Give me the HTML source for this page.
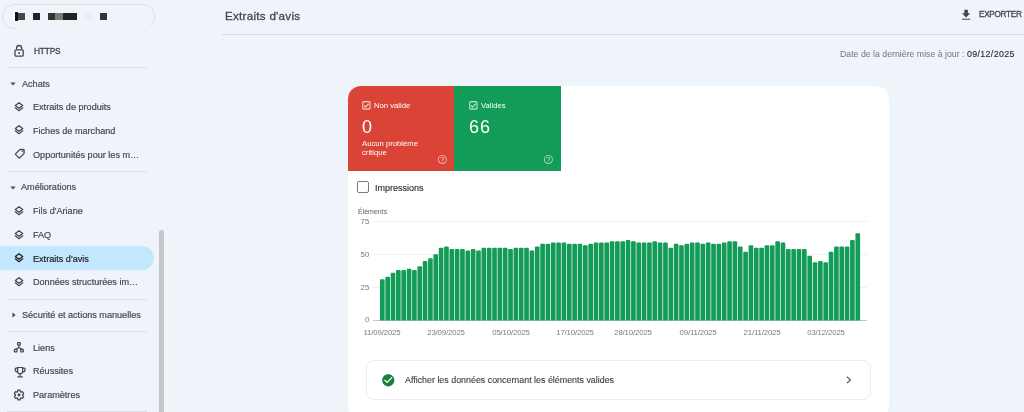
<!DOCTYPE html>
<html><head><meta charset="utf-8">
<style>
*{margin:0;padding:0;box-sizing:border-box}
html,body{width:1024px;height:412px;overflow:hidden;background:#eff3fa;font-family:"Liberation Sans",sans-serif;color:#444746}
.a{position:absolute;white-space:nowrap;line-height:1;will-change:transform}
svg{position:absolute;display:block;overflow:visible}
.side{font-size:9.1px;color:#444746;-webkit-text-stroke:0.18px #444746}
.hdr{font-size:9.1px;color:#444746;-webkit-text-stroke:0.18px #444746}
.dv{position:absolute;height:1px;background:#dcdfe1}
.tl{font-size:7.7px;color:#fff}
.big{font-size:18px;color:#fff}
.yl{left:350px;width:19.3px;text-align:right;font-size:7.8px;color:#757a7f}
.xl{width:60px;text-align:center;top:328.9px;font-size:7.8px;letter-spacing:-0.15px;color:#757a7f}
</style></head><body>

<svg style="left:0;top:0" width="160" height="32" viewBox="0 0 160 32"><path fill="none" stroke="#dcdfe4" stroke-width="1" d="M17.5 28.5H14.5A12 12 0 0 1 14.5 4.5H142.5A12 12 0 0 1 150.5 25.5"/></svg>
<div style="position:absolute;left:12.8px;top:9.7px;width:5.1px;height:13.4px;background:#fff;border-radius:2px"></div>
<div style="position:absolute;left:14.9px;top:11.9px;width:2.7px;height:8.8px;background:#111"></div>
<div style="position:absolute;left:17.6px;top:12.7px;width:7.4px;height:7.2px;background:#4a4446"></div>
<div style="position:absolute;left:32.8px;top:12.7px;width:7.2px;height:7.2px;background:#232323"></div>
<div style="position:absolute;left:47.6px;top:12.6px;width:7.4px;height:7.3px;background:#333"></div>
<div style="position:absolute;left:55px;top:12.6px;width:7.6px;height:7.3px;background:#787b7a"></div>
<div style="position:absolute;left:62.6px;top:12.6px;width:14.6px;height:7.3px;background:#222"></div>
<div style="position:absolute;left:84.5px;top:12.5px;width:8.6px;height:7.4px;background:#eceef2"></div>
<div style="position:absolute;left:100.1px;top:12.6px;width:7.3px;height:7.3px;background:#333"></div>

<svg style="left:8px;top:39px" width="24" height="24" viewBox="0 0 24 24"><g fill="none" stroke="#444746" stroke-width="1.3"><rect x="7" y="10.8" width="8.2" height="6.4" rx="1.2"/><path d="M8.6 10.8V9a2.5 2.5 0 0 1 5 0v1.8"/></g><circle cx="11.1" cy="13.9" r="1" fill="#444746"/></svg>
<div class="a side" style="left:33.5px;top:47.2px;font-size:8.3px;letter-spacing:-0.15px;-webkit-text-stroke:0.3px #444746">HTTPS</div>
<div class="dv" style="left:7px;top:67px;width:140px"></div>

<svg style="left:10px;top:82px" width="6" height="4" viewBox="0 0 6 4"><path fill="#444746" d="M0.5 0.5h5L3 3.5z"/></svg>
<div class="a hdr" style="left:21.6px;top:79.60px;">Achats</div>
<svg style="left:13px;top:100.60px" width="12" height="12" viewBox="0 0 24 24"><g fill="none" stroke="#444746" stroke-width="2.5" stroke-linejoin="round" stroke-linecap="round"><path d="M12 3.6L19.4 9.1L12 14.6L4.6 9.1Z"/><path d="M4.6 13.7L12 19.3L19.4 13.7"/></g></svg>
<div class="a side" style="left:33.4px;top:102.90px;">Extraits de produits</div>
<svg style="left:13px;top:124.10px" width="12" height="12" viewBox="0 0 24 24"><g fill="none" stroke="#444746" stroke-width="2.5" stroke-linejoin="round" stroke-linecap="round"><path d="M12 3.6L19.4 9.1L12 14.6L4.6 9.1Z"/><path d="M4.6 13.7L12 19.3L19.4 13.7"/></g></svg>
<div class="a side" style="left:33.4px;top:126.70px;">Fiches de marchand</div>
<svg style="left:13.5px;top:147.8px" width="11.5" height="11.5" viewBox="0 0 24 24"><g transform="rotate(90 12 12)"><path fill="#444746" stroke="#444746" stroke-width="0.7" stroke-linejoin="round" d="M21.41 11.41l-8.83-8.83c-.37-.37-.88-.58-1.41-.58H4c-1.1 0-2 .9-2 2v7.17c0 .53.21 1.04.59 1.41l8.83 8.83c.78.78 2.05.78 2.83 0l7.17-7.17c.78-.78.78-2.04-.01-2.83zM12.83 20L4 11.17V4h7.17L20 12.83 12.83 20zM6.5 5C7.33 5 8 5.67 8 6.5S7.33 8 6.5 8 5 7.33 5 6.5 5.67 5 6.5 5z"/></g></svg>
<div class="a side" style="left:33.4px;top:151.00px;">Opportunités pour les m…</div>
<div class="dv" style="left:7px;top:171px;width:140px"></div>
<svg style="left:10px;top:186px" width="6" height="4" viewBox="0 0 6 4"><path fill="#444746" d="M0.5 0.5h5L3 3.5z"/></svg>
<div class="a hdr" style="left:21.4px;top:183.20px;">Améliorations</div>
<svg style="left:13px;top:204.60px" width="12" height="12" viewBox="0 0 24 24"><g fill="none" stroke="#444746" stroke-width="2.5" stroke-linejoin="round" stroke-linecap="round"><path d="M12 3.6L19.4 9.1L12 14.6L4.6 9.1Z"/><path d="M4.6 13.7L12 19.3L19.4 13.7"/></g></svg>
<div class="a side" style="left:33.4px;top:207.00px;">Fils d'Ariane</div>
<svg style="left:13px;top:228.60px" width="12" height="12" viewBox="0 0 24 24"><g fill="none" stroke="#444746" stroke-width="2.5" stroke-linejoin="round" stroke-linecap="round"><path d="M12 3.6L19.4 9.1L12 14.6L4.6 9.1Z"/><path d="M4.6 13.7L12 19.3L19.4 13.7"/></g></svg>
<div class="a side" style="left:33.4px;top:230.90px;">FAQ</div>
<div style="position:absolute;left:-20px;top:246.4px;width:174px;height:24px;background:#c2e7ff;border-radius:0 12px 12px 0"></div>
<svg style="left:13px;top:252.10px" width="12" height="12" viewBox="0 0 24 24"><g fill="none" stroke="#1f1f1f" stroke-width="2.5" stroke-linejoin="round" stroke-linecap="round"><path d="M12 3.6L19.4 9.1L12 14.6L4.6 9.1Z"/><path d="M4.6 13.7L12 19.3L19.4 13.7"/></g></svg>
<div class="a side" style="left:33.4px;top:254.60px;color:#1f1f1f;-webkit-text-stroke:0.2px #1f1f1f">Extraits d'avis</div>
<svg style="left:13px;top:275.60px" width="12" height="12" viewBox="0 0 24 24"><g fill="none" stroke="#444746" stroke-width="2.5" stroke-linejoin="round" stroke-linecap="round"><path d="M12 3.6L19.4 9.1L12 14.6L4.6 9.1Z"/><path d="M4.6 13.7L12 19.3L19.4 13.7"/></g></svg>
<div class="a side" style="left:33.4px;top:278.10px;">Données structurées im…</div>
<div class="dv" style="left:7px;top:298.5px;width:140px"></div>
<svg style="left:11.8px;top:312px" width="4" height="6" viewBox="0 0 4 6"><path fill="#444746" d="M0.5 0.5v5L3.5 3z"/></svg>
<div class="a hdr" style="left:21.8px;top:310.70px;">Sécurité et actions manuelles</div>
<div class="dv" style="left:7px;top:331px;width:140px"></div>
<svg style="left:8px;top:338px" width="24" height="24" viewBox="0 0 24 24"><g fill="none" stroke="#444746" stroke-width="1.2"><rect x="9.6" y="4.6" width="2.7" height="2.5" rx=".3"/><rect x="6.4" y="11.4" width="2.6" height="2.4" rx=".3"/><rect x="12.7" y="11.4" width="2.6" height="2.4" rx=".3"/><path d="M10.95 7.6V9.4L7.7 11.2M10.95 9.4l3.1 1.8"/></g></svg>
<div class="a side" style="left:33.4px;top:343.70px;">Liens</div>
<svg style="left:8px;top:359px" width="24" height="24" viewBox="0 0 24 24"><g fill="none" stroke="#444746" stroke-width="1.2"><path d="M9.6 8.5h5v3.8a2.5 2.5 0 0 1-5 0z"/><path d="M9.6 9.2H8a.9.9 0 0 0-.9.9v.3a2.6 2.6 0 0 0 2.6 2.6M14.6 9.2h1.6a.9.9 0 0 1 .9.9v.3a2.6 2.6 0 0 1-2.6 2.6"/></g><rect x="11.55" y="14.6" width="1.1" height="3" fill="#444746"/><rect x="9.4" y="17.2" width="5.4" height="1.4" rx=".3" fill="#444746"/></svg>
<div class="a side" style="left:33.4px;top:367.40px;">Réussites</div>
<svg style="left:13px;top:389px" width="12" height="12" viewBox="0 0 24 24"><path fill="none" stroke="#444746" stroke-width="2.5" d="M19.14 12.94c.04-.3.06-.61.06-.94 0-.32-.02-.64-.07-.94l2.03-1.58c.18-.14.23-.41.12-.61l-1.92-3.32c-.12-.22-.37-.29-.59-.22l-2.39.96c-.5-.38-1.03-.7-1.62-.94l-.36-2.54c-.04-.24-.24-.41-.48-.41h-3.84c-.24 0-.43.17-.47.41l-.36 2.54c-.59.24-1.130.57-1.62.94l-2.39-.96c-.22-.08-.47 0-.59.22L2.74 8.87c-.12.21-.08.47.12.61l2.03 1.58c-.05.3-.09.63-.09.94s.02.64.07.94l-2.03 1.58c-.18.14-.23.41-.12.61l1.92 3.32c.12.22.37.29.59.22l2.39-.96c.5.38 1.03.7 1.62.94l.36 2.54c.05.24.24.41.48.41h3.84c.24 0 .44-.17.47-.41l.36-2.54c.59-.24 1.13-.56 1.62-.94l2.39.96c.22.08.47 0 .59-.22l1.92-3.32c.12-.22.07-.47-.12-.61l-2.01-1.58z"/><circle cx="12" cy="12" r="2.9" fill="#444746"/></svg>
<div class="a side" style="left:33.4px;top:391.00px;">Paramètres</div>
<div class="dv" style="left:7px;top:411px;width:140px"></div>
<div style="position:absolute;left:159px;top:230px;width:4.5px;height:200px;background:#c5c6c8;border-radius:2.25px"></div>
<div class="a" style="left:224.6px;top:10.2px;font-size:11.6px;letter-spacing:0.28px;color:#444746;-webkit-text-stroke:0.3px #444746">Extraits d'avis</div>
<div class="dv" style="left:222px;top:34px;width:802px;background:#d9dde3"></div>
<svg style="left:959.2px;top:7.9px" width="14.2" height="14.2" viewBox="0 0 24 24"><path fill="#444746" d="M19 9h-4V3H9v6H5l7 7 7-7zM5 18v2h14v-2H5z"/></svg>
<div class="a" style="left:978.8px;top:11.2px;font-size:8.2px;letter-spacing:-0.3px;color:#444746;-webkit-text-stroke:0.3px #444746">EXPORTER</div>
<div class="a" style="right:9.5px;top:49.5px;font-size:8.75px;color:#70757a">Date de la dernière mise à jour : <span style="color:#303134;font-size:8.85px;letter-spacing:0.35px;-webkit-text-stroke:0.15px #303134">09/12/202<span style="letter-spacing:0">5</span></span></div>

<div style="position:absolute;left:348px;top:86.4px;width:541px;height:333px;background:#fff;border-radius:13px;overflow:hidden">
  <div style="position:absolute;left:0;top:0;width:106.3px;height:85px;background:#d94436"></div>
  <div style="position:absolute;left:106.3px;top:0;width:106.8px;height:85px;background:#129c57"></div>
</div>

<svg style="left:360.9px;top:99.9px" width="10.8" height="10.8" viewBox="0 0 24 24"><path fill="#fff" fill-opacity=".9" d="M19 3H5c-1.11 0-2 .9-2 2v14c0 1.1.89 2 2 2h14c1.11 0 2-.9 2-2V5c0-1.1-.89-2-2-2zm0 16H5V5h14v14zM17.99 9l-1.41-1.42-6.59 6.59-2.58-2.57-1.42 1.41 4 3.99z"/></svg>
<div class="a tl" style="left:373.7px;top:101.5px">Non valide</div>
<div class="a big" style="left:361.6px;top:118.2px">0</div>
<div class="a tl" style="left:361.8px;top:139.2px;line-height:9px">Aucun problème<br>critique</div>
<svg style="left:436.9px;top:154px" width="10.8" height="10.8" viewBox="0 0 24 24"><path fill="#fff" fill-opacity=".6" d="M11 18h2v-2h-2v2zm1-16C6.48 2 2 6.48 2 12s4.48 10 10 10 10-4.48 10-10S17.52 2 12 2zm0 18c-4.41 0-8-3.59-8-8s3.590-8 8-8 8 3.59 8 8-3.59 8-8 8zm0-14c-2.21 0-4 1.79-4 4h2c0-1.1.9-2 2-2s2 .9 2 2c0 2-3 1.75-3 5h2c0-2.25 3-2.5 3-5 0-2.21-1.79-4-4-4z"/></svg>
<svg style="left:467.9px;top:99.9px" width="10.8" height="10.8" viewBox="0 0 24 24"><path fill="#fff" fill-opacity=".9" d="M19 3H5c-1.11 0-2 .9-2 2v14c0 1.1.89 2 2 2h14c1.11 0 2-.9 2-2V5c0-1.1-.89-2-2-2zm0 16H5V5h14v14zM17.99 9l-1.41-1.42-6.59 6.59-2.58-2.57-1.42 1.41 4 3.99z"/></svg>
<div class="a tl" style="left:480.5px;top:101.5px">Valides</div>
<div class="a big" style="left:468.9px;top:118.2px;letter-spacing:1px">66</div>
<svg style="left:543.2px;top:154px" width="10.8" height="10.8" viewBox="0 0 24 24"><path fill="#fff" fill-opacity=".6" d="M11 18h2v-2h-2v2zm1-16C6.48 2 2 6.48 2 12s4.48 10 10 10 10-4.48 10-10S17.52 2 12 2zm0 18c-4.41 0-8-3.59-8-8s3.590-8 8-8 8 3.59 8 8-3.59 8-8 8zm0-14c-2.21 0-4 1.79-4 4h2c0-1.1.9-2 2-2s2 .9 2 2c0 2-3 1.75-3 5h2c0-2.25 3-2.5 3-5 0-2.21-1.79-4-4-4z"/></svg>

<div style="position:absolute;left:357.3px;top:181.3px;width:12px;height:12px;border:1.6px solid #787c80;border-radius:2px"></div>
<div class="a" style="left:375.4px;top:183.6px;font-size:9px;color:#303134;-webkit-text-stroke:0.15px #303134">Impressions</div>
<div class="a" style="left:357.5px;top:208.3px;font-size:7px;color:#5f6368">Éléments</div>

<svg style="left:340px;top:200px" width="540" height="145" viewBox="0 0 540 145"><rect x="33" y="21" width="494" height="1" fill="#eef0f2"/><rect x="33" y="54" width="494" height="1" fill="#eef0f2"/><rect x="33" y="87" width="494" height="1" fill="#eef0f2"/><rect x="33" y="120" width="494" height="1" fill="#c4c7cb"/><g fill="#129c57"><path d="M40.00 120.50V80.29q0-1 1-1h2.65q1 0 1 1V120.50z"/><path d="M45.34 120.50V77.66q0-1 1-1h2.65q1 0 1 1V120.50z"/><path d="M50.68 120.50V73.72q0-1 1-1h2.65q1 0 1 1V120.50z"/><path d="M56.03 120.50V71.09q0-1 1-1h2.65q1 0 1 1V120.50z"/><path d="M61.37 120.50V71.09q0-1 1-1h2.65q1 0 1 1V120.50z"/><path d="M66.71 120.50V69.78q0-1 1-1h2.65q1 0 1 1V120.50z"/><path d="M72.05 120.50V71.09q0-1 1-1h2.65q1 0 1 1V120.50z"/><path d="M77.39 120.50V67.15q0-1 1-1h2.65q1 0 1 1V120.50z"/><path d="M82.74 120.50V61.90q0-1 1-1h2.65q1 0 1 1V120.50z"/><path d="M88.08 120.50V59.27q0-1 1-1h2.65q1 0 1 1V120.50z"/><path d="M93.42 120.50V55.34q0-1 1-1h2.65q1 0 1 1V120.50z"/><path d="M98.76 120.50V48.77q0-1 1-1h2.65q1 0 1 1V120.50z"/><path d="M104.10 120.50V47.46q0-1 1-1h2.65q1 0 1 1V120.50z"/><path d="M109.45 120.50V50.08q0-1 1-1h2.65q1 0 1 1V120.50z"/><path d="M114.79 120.50V50.08q0-1 1-1h2.65q1 0 1 1V120.50z"/><path d="M120.13 120.50V50.08q0-1 1-1h2.65q1 0 1 1V120.50z"/><path d="M125.47 120.50V51.40q0-1 1-1h2.65q1 0 1 1V120.50z"/><path d="M130.81 120.50V50.08q0-1 1-1h2.65q1 0 1 1V120.50z"/><path d="M136.16 120.50V51.40q0-1 1-1h2.65q1 0 1 1V120.50z"/><path d="M141.50 120.50V48.77q0-1 1-1h2.65q1 0 1 1V120.50z"/><path d="M146.84 120.50V48.77q0-1 1-1h2.65q1 0 1 1V120.50z"/><path d="M152.18 120.50V48.77q0-1 1-1h2.65q1 0 1 1V120.50z"/><path d="M157.52 120.50V48.77q0-1 1-1h2.65q1 0 1 1V120.50z"/><path d="M162.87 120.50V48.77q0-1 1-1h2.65q1 0 1 1V120.50z"/><path d="M168.21 120.50V50.08q0-1 1-1h2.65q1 0 1 1V120.50z"/><path d="M173.55 120.50V48.77q0-1 1-1h2.65q1 0 1 1V120.50z"/><path d="M178.89 120.50V48.77q0-1 1-1h2.65q1 0 1 1V120.50z"/><path d="M184.23 120.50V48.77q0-1 1-1h2.65q1 0 1 1V120.50z"/><path d="M189.58 120.50V51.40q0-1 1-1h2.65q1 0 1 1V120.50z"/><path d="M194.92 120.50V47.46q0-1 1-1h2.65q1 0 1 1V120.50z"/><path d="M200.26 120.50V44.83q0-1 1-1h2.65q1 0 1 1V120.50z"/><path d="M205.60 120.50V44.83q0-1 1-1h2.65q1 0 1 1V120.50z"/><path d="M210.94 120.50V43.52q0-1 1-1h2.65q1 0 1 1V120.50z"/><path d="M216.29 120.50V43.52q0-1 1-1h2.65q1 0 1 1V120.50z"/><path d="M221.63 120.50V43.52q0-1 1-1h2.65q1 0 1 1V120.50z"/><path d="M226.97 120.50V44.83q0-1 1-1h2.65q1 0 1 1V120.50z"/><path d="M232.31 120.50V44.83q0-1 1-1h2.65q1 0 1 1V120.50z"/><path d="M237.65 120.50V44.83q0-1 1-1h2.65q1 0 1 1V120.50z"/><path d="M243.00 120.50V46.14q0-1 1-1h2.65q1 0 1 1V120.50z"/><path d="M248.34 120.50V44.83q0-1 1-1h2.65q1 0 1 1V120.50z"/><path d="M253.68 120.50V43.52q0-1 1-1h2.65q1 0 1 1V120.50z"/><path d="M259.02 120.50V43.52q0-1 1-1h2.65q1 0 1 1V120.50z"/><path d="M264.36 120.50V43.52q0-1 1-1h2.65q1 0 1 1V120.50z"/><path d="M269.71 120.50V42.20q0-1 1-1h2.65q1 0 1 1V120.50z"/><path d="M275.05 120.50V42.20q0-1 1-1h2.65q1 0 1 1V120.50z"/><path d="M280.39 120.50V42.20q0-1 1-1h2.65q1 0 1 1V120.50z"/><path d="M285.73 120.50V40.89q0-1 1-1h2.65q1 0 1 1V120.50z"/><path d="M291.07 120.50V42.20q0-1 1-1h2.65q1 0 1 1V120.50z"/><path d="M296.42 120.50V43.52q0-1 1-1h2.65q1 0 1 1V120.50z"/><path d="M301.76 120.50V43.52q0-1 1-1h2.65q1 0 1 1V120.50z"/><path d="M307.10 120.50V43.52q0-1 1-1h2.65q1 0 1 1V120.50z"/><path d="M312.44 120.50V42.20q0-1 1-1h2.65q1 0 1 1V120.50z"/><path d="M317.78 120.50V43.52q0-1 1-1h2.65q1 0 1 1V120.50z"/><path d="M323.13 120.50V43.52q0-1 1-1h2.65q1 0 1 1V120.50z"/><path d="M328.47 120.50V48.77q0-1 1-1h2.65q1 0 1 1V120.50z"/><path d="M333.81 120.50V44.83q0-1 1-1h2.65q1 0 1 1V120.50z"/><path d="M339.15 120.50V46.14q0-1 1-1h2.65q1 0 1 1V120.50z"/><path d="M344.49 120.50V44.83q0-1 1-1h2.65q1 0 1 1V120.50z"/><path d="M349.84 120.50V43.52q0-1 1-1h2.65q1 0 1 1V120.50z"/><path d="M355.18 120.50V43.52q0-1 1-1h2.65q1 0 1 1V120.50z"/><path d="M360.52 120.50V44.83q0-1 1-1h2.65q1 0 1 1V120.50z"/><path d="M365.86 120.50V43.52q0-1 1-1h2.65q1 0 1 1V120.50z"/><path d="M371.20 120.50V44.83q0-1 1-1h2.65q1 0 1 1V120.50z"/><path d="M376.55 120.50V44.83q0-1 1-1h2.65q1 0 1 1V120.50z"/><path d="M381.89 120.50V43.52q0-1 1-1h2.65q1 0 1 1V120.50z"/><path d="M387.23 120.50V42.20q0-1 1-1h2.65q1 0 1 1V120.50z"/><path d="M392.57 120.50V42.20q0-1 1-1h2.65q1 0 1 1V120.50z"/><path d="M397.91 120.50V47.46q0-1 1-1h2.65q1 0 1 1V120.50z"/><path d="M403.26 120.50V52.71q0-1 1-1h2.65q1 0 1 1V120.50z"/><path d="M408.60 120.50V46.14q0-1 1-1h2.65q1 0 1 1V120.50z"/><path d="M413.94 120.50V48.77q0-1 1-1h2.65q1 0 1 1V120.50z"/><path d="M419.28 120.50V48.77q0-1 1-1h2.65q1 0 1 1V120.50z"/><path d="M424.62 120.50V46.14q0-1 1-1h2.65q1 0 1 1V120.50z"/><path d="M429.97 120.50V46.14q0-1 1-1h2.65q1 0 1 1V120.50z"/><path d="M435.31 120.50V42.20q0-1 1-1h2.65q1 0 1 1V120.50z"/><path d="M440.65 120.50V43.52q0-1 1-1h2.65q1 0 1 1V120.50z"/><path d="M445.99 120.50V50.08q0-1 1-1h2.65q1 0 1 1V120.50z"/><path d="M451.33 120.50V50.08q0-1 1-1h2.65q1 0 1 1V120.50z"/><path d="M456.68 120.50V50.08q0-1 1-1h2.65q1 0 1 1V120.50z"/><path d="M462.02 120.50V50.08q0-1 1-1h2.65q1 0 1 1V120.50z"/><path d="M467.36 120.50V56.65q0-1 1-1h2.65q1 0 1 1V120.50z"/><path d="M472.70 120.50V63.21q0-1 1-1h2.65q1 0 1 1V120.50z"/><path d="M478.04 120.50V61.90q0-1 1-1h2.65q1 0 1 1V120.50z"/><path d="M483.39 120.50V63.21q0-1 1-1h2.65q1 0 1 1V120.50z"/><path d="M488.73 120.50V52.71q0-1 1-1h2.65q1 0 1 1V120.50z"/><path d="M494.07 120.50V47.46q0-1 1-1h2.65q1 0 1 1V120.50z"/><path d="M499.41 120.50V47.46q0-1 1-1h2.65q1 0 1 1V120.50z"/><path d="M504.75 120.50V47.46q0-1 1-1h2.65q1 0 1 1V120.50z"/><path d="M510.10 120.50V40.89q0-1 1-1h2.65q1 0 1 1V120.50z"/><path d="M515.44 120.50V34.32q0-1 1-1h2.65q1 0 1 1V120.50z"/></g></svg>
<div class="a yl" style="top:217.9px">75</div>
<div class="a yl" style="top:250.7px">50</div>
<div class="a yl" style="top:283.6px">25</div>
<div class="a yl" style="top:316.4px">0</div>
<div class="a xl" style="left:352.32px">11/09/2025</div>
<div class="a xl" style="left:416.43px">23/09/2025</div>
<div class="a xl" style="left:480.53px">05/10/2025</div>
<div class="a xl" style="left:544.64px">17/10/2025</div>
<div class="a xl" style="left:603.40px">28/10/2025</div>
<div class="a xl" style="left:667.50px">09/11/2025</div>
<div class="a xl" style="left:731.61px">21/11/2025</div>
<div class="a xl" style="left:795.71px">03/12/2025</div>
<div style="position:absolute;left:366.2px;top:360.2px;width:504.7px;height:39.6px;border:1px solid #ebecee;border-radius:8px"></div>
<svg style="left:381.1px;top:372.6px" width="14.6" height="14.6" viewBox="0 0 24 24"><path fill="#188038" d="M12 2C6.48 2 2 6.48 2 12s4.48 10 10 10 10-4.48 10-10S17.52 2 12 2zm-2 15l-5-5 1.41-1.41L10 14.17l7.59-7.59L19 8l-9 9z"/></svg>
<div class="a" style="left:405.2px;top:375.6px;font-size:8.9px;color:#3c4043;-webkit-text-stroke:0.12px #3c4043">Afficher les données concernant les éléments valides</div>
<svg style="left:840px;top:370px" width="16" height="20" viewBox="0 0 16 20"><path fill="none" stroke="#5f6368" stroke-width="1.3" d="M6.9 6.8L10.5 9.9L6.9 13"/></svg>

</body></html>
